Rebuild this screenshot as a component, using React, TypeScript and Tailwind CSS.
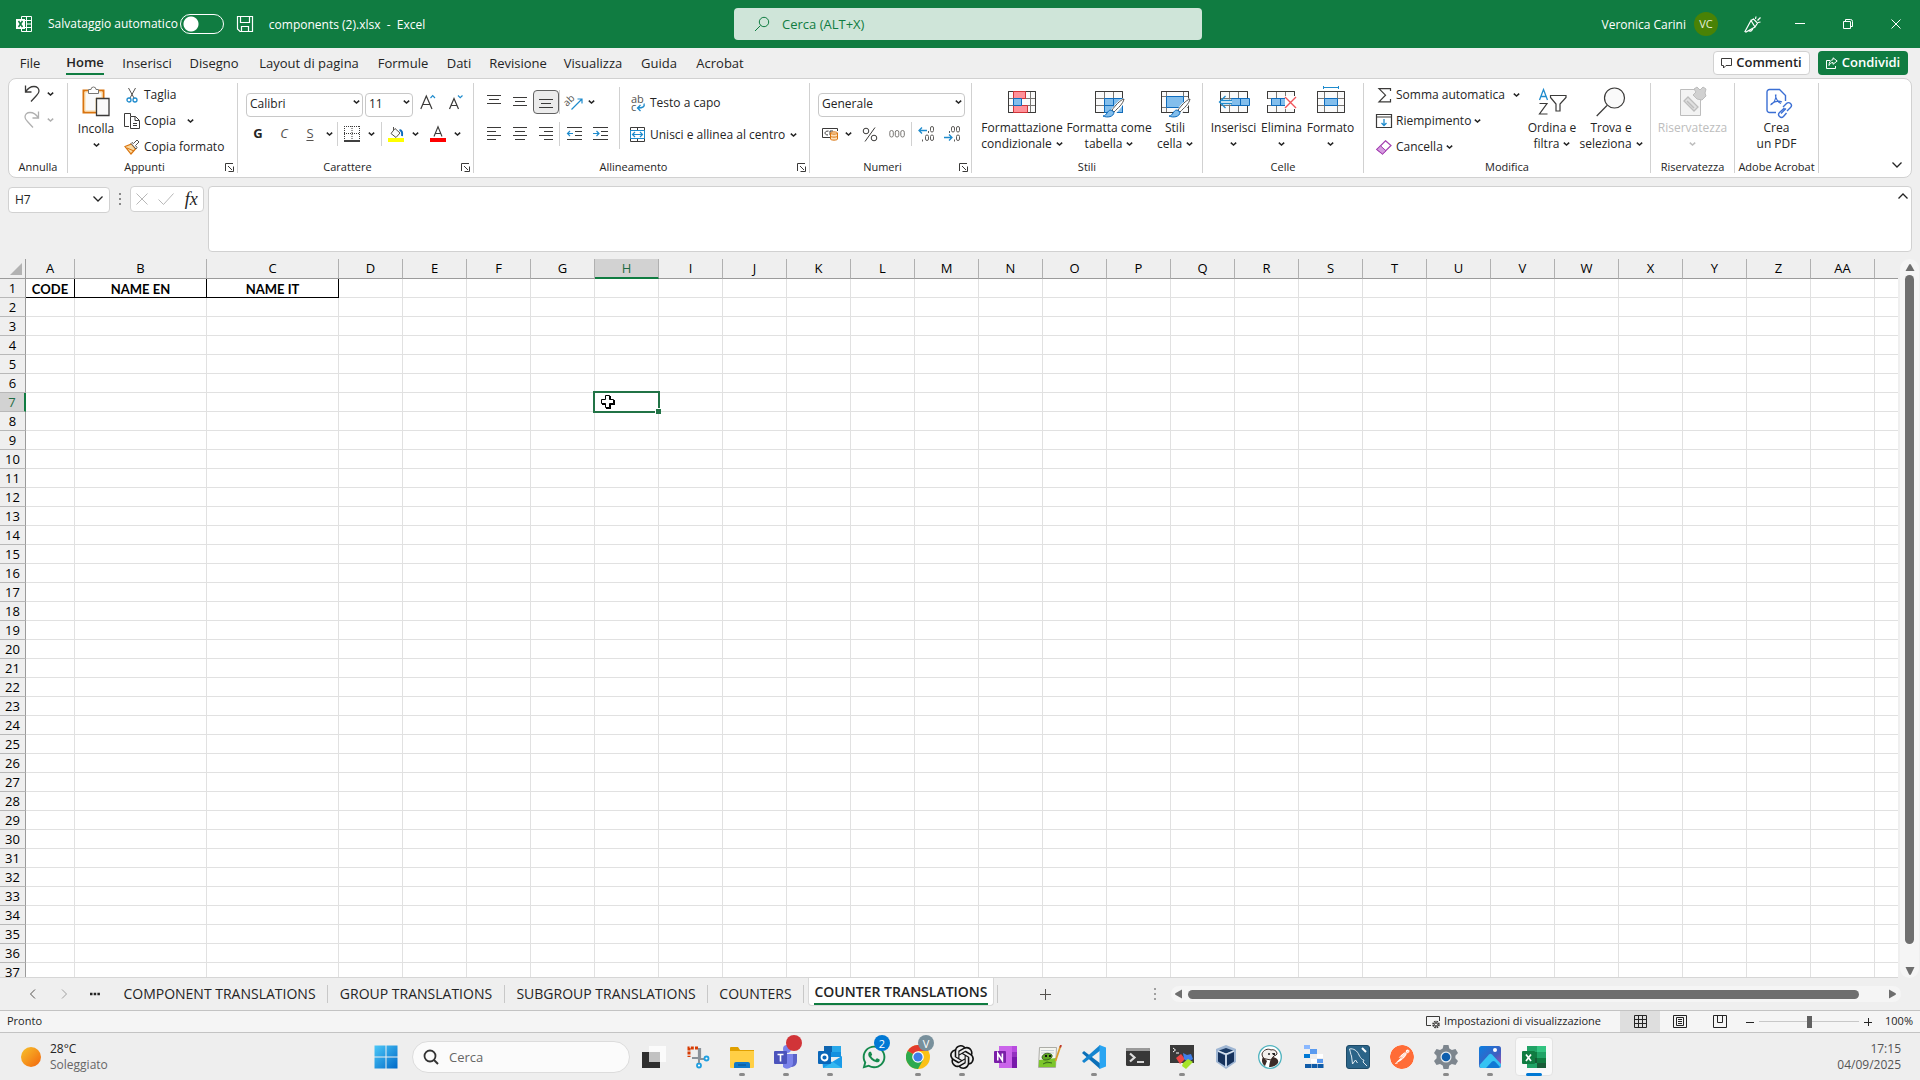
import React from "react";
import { SiOpenai, SiPostman } from "react-icons/si";
import { FaWhatsapp } from "react-icons/fa";

type Kids = { children?: React.ReactNode };

function Svg({ w, h, children }: { w: number; h: number } & Kids) {
  return (
    <svg width={w} height={h} viewBox={`0 0 ${w} ${h}`} fill="none" stroke="#3b3a39" aria-hidden="true" className="shrink-0 overflow-visible">
      {children}
    </svg>
  );
}

function Chevron({ color = "#242424", big = false, up = false }: { color?: string; big?: boolean; up?: boolean }) {
  return big ? (
    <Svg w={10} h={6}>
      <path d={up ? "M.5 5.5 5 1l4.500 4.500" : "M.5.5 5 5 9.500.5"} stroke={color} strokeWidth="1.300" />
    </Svg>
  ) : (
    <Svg w={7} h={4}>
      <path d="M.8.6 3.500 3 6.200.6" stroke={color} strokeWidth="1.500" />
    </Svg>
  );
}

const Launcher = () => (
  <button aria-label="Altre opzioni" className="absolute right-[3px] bottom-[1px] flex">
    <Svg w={9} h={9}>
      <path d="M.5 8V.5H8M3 3l4 4M8.500 3.500v5h-5" stroke="#3b3a39" />
    </Svg>
  </button>
);

function Group({ label, width, launcher, children }: { label: string; width: string; launcher?: boolean } & Kids) {
  return (
    <section aria-label={label} className={`relative my-1 flex shrink-0 flex-col border-r border-[#d1d1d1] ${width}`}>
      <div className="flex h-[78px] shrink-0">{children}</div>
      <div className={`text-center text-[11px] leading-3 whitespace-nowrap text-[#242424] ${launcher ? "pr-4" : ""}`}>{label}</div>
      {launcher && <Launcher />}
    </section>
  );
}

function IconBtn({ label, w = "w-[26px]", pressed, children }: { label: string; w?: string; pressed?: boolean } & Kids) {
  return (
    <button
      aria-label={label}
      aria-pressed={pressed}
      className={`flex h-6 shrink-0 items-center justify-center ${w} ${pressed ? "rounded border border-[#616161] bg-[#ebebeb]" : ""}`}
    >
      {children}
    </button>
  );
}

const Sep = () => <span className="h-6 w-px shrink-0 bg-[#d1d1d1]" />;

function BigBtn({ icon, lines, w, below, disabled }: { icon: React.ReactNode; lines: [string, string?]; w: string; below?: boolean; disabled?: boolean }) {
  return (
    <button disabled={disabled} className={`flex shrink-0 flex-col items-center pt-px whitespace-nowrap ${w} ${disabled ? "text-[#bdbdbd]" : ""}`}>
      <span className="flex h-9 items-center justify-center">{icon}</span>
      <span className="text-[12px] leading-4">{lines[0]}</span>
      <span className="flex h-4 items-center gap-1 text-[12px] leading-4">
        {lines[1]}
        {below && <Chevron color={disabled ? "#bdbdbd" : "#242424"} />}
      </span>
    </button>
  );
}

function RowBtn({ icon, text, chevron }: { icon: React.ReactNode; text: string; chevron?: string }) {
  return (
    <button className="flex h-[26px] items-center gap-1 text-[12px] whitespace-nowrap">
      <span className="flex w-4 justify-center">{icon}</span>
      {text}
      {chevron && <span className={chevron}><Chevron /></span>}
    </button>
  );
}

function Combo({ label, value, w }: { label: string; value: string; w: string }) {
  return (
    <div className={`relative h-6 shrink-0 ${w}`}>
      <select aria-label={label} defaultValue={value} className="h-6 w-full appearance-none rounded border border-[#c8c8c8] bg-white pb-[2px] pl-[3px] text-[12px] outline-none">
        <option>{value}</option>
      </select>
      <span className="pointer-events-none absolute top-[10px] right-[3px] flex"><Chevron /></span>
    </div>
  );
}

/* Ribbon drawings */
const Undo = ({ color, flip }: { color: string; flip?: boolean }) => (
  <Svg w={16} h={17}>
    <g transform={flip ? "translate(16 0) scale(-1 1)" : undefined} stroke={color} strokeWidth="1.3">
      <path d="M1.500.5v6.500h6M1.500 7C4 3 7 1.500 10 1.500c3 0 5 2 5 4.500 0 2-1 3-2.500 4.500L7 16.500" />
    </g>
  </Svg>
);
const Paste = () => (
  <Svg w={28} h={31}>
    <path d="M6 4.500H1.500v22H14M17 4.500h4.500V12" stroke="#d9740f" strokeWidth="2" />
    <path d="M3 6h17v6h-6v13H3z" fill="#fafafa" stroke="#fbd9a0" />
    <path d="M6.500 7.500v-4H9a2.500 2.500 0 0 1 5 0h2.500v4z" fill="#fff" stroke="#797774" />
    <path d="M14.500 12.500h12.500v17H14.500z" fill="#fafafa" strokeWidth="1.300" />
  </Svg>
);
const Scissors = () => (
  <Svg w={12} h={16}>
    <path d="M2.500 1 8 11M9.500 1 4 11" stroke="#55524f" />
    <circle cx="3" cy="13" r="2" stroke="#1e8bcd" strokeWidth="1.300" />
    <circle cx="9" cy="13" r="2" stroke="#1e8bcd" strokeWidth="1.300" />
  </Svg>
);
const Copy = () => (
  <Svg w={16} h={16}>
    <path d="M5 13.500H.5V.5H6.500V3" />
    <path d="M6.500 3.500h5l4 4v8h-9zM11 3.500v4h4M9 10.500h4M9 12.500h4" />
  </Svg>
);
const Brush = () => (
  <Svg w={16} h={16}>
    <path d="M1 7.500 7.500 5l4 5L7 15z" fill="#fbd9a0" stroke="#d9740f" strokeWidth="1.200" />
    <path d="m3 9 7 3" stroke="#d9740f" />
    <path d="M7 4.500 12 10l1-1.500-1.500-2L15 3l-2-2-3.500 3.500-1.500-1z" fill="#fff" stroke="#55524f" />
  </Svg>
);
const ABig = ({ small }: { small?: boolean }) => (
  <Svg w={17} h={16}>
    <path d={small ? "M1.500 15 6 4.500 10.500 15M3 11.500h6" : "M.8 15 6.300 2 12 15M3 10.500h7"} strokeWidth="1.200" />
    <path d={small ? "m10 1.500 2.200 2.200L14.500 1.500" : "m10.500 4 2.200-2.300L15 4"} stroke="#1e8bcd" strokeWidth="1.200" />
  </Svg>
);
const Borders = () => (
  <Svg w={16} h={16}>
    <path d="M.5 0v14M15.500 0v14M8 0v14M0 .5h16M0 7.500h16" strokeDasharray="1 1" />
    <path d="M0 15h16" stroke="#000" strokeWidth="1.500" />
  </Svg>
);
const Bucket = () => (
  <Svg w={16} h={16}>
    <path d="M7 2.500 12 7l-4 4.500L3 7.500z" fill="#fafafa" stroke="#55524f" />
    <path d="M5.500 4.500V1" stroke="#55524f" />
    <path d="M11.500 4c3 .5 3 3 2.500 6" stroke="#0f6cbd" strokeWidth="2" />
    <path d="M0 14h16" stroke="#ff0" strokeWidth="4" />
  </Svg>
);
const FontColor = () => (
  <Svg w={16} h={16}>
    <path d="M4 10.500 8 .8l4 9.700M5.200 7.500h5.600" strokeWidth="1.100" />
    <path d="M0 14h16" stroke="red" strokeWidth="4" />
  </Svg>
);
const Lines = ({ d }: { d: string }) => (
  <Svg w={14} h={14}>
    <path d={d} />
  </Svg>
);
const Orient = () => (
  <Svg w={17} h={16}>
    <text x="1" y="13" fontSize="10" fill="#55524f" stroke="none" transform="rotate(-45 1 13)" fontFamily="Open Sans">ab</text>
    <path d="M5.500 15.500 16 5M11.500 5H16v4.500" stroke="#1e8bcd" strokeWidth="1.200" />
  </Svg>
);
const Indent = ({ right }: { right?: boolean }) => (
  <Svg w={15} h={14}>
    <path d="M0 .5h15M8 4.500h7M8 8.500h7M0 12.500h15" />
    <path d={right ? "M0 6.500h6M3.500 4 6 6.500 3.500 9" : "M6 6.500H.5M3 4 .5 6.500 3 9"} stroke="#1e8bcd" strokeWidth="1.200" />
  </Svg>
);
const Wrap = () => (
  <Svg w={16} h={17}>
    <text fontSize="11" fill="#55524f" stroke="none" fontFamily="Open Sans">
      <tspan x="1" y="8">ab</tspan>
      <tspan x="1" y="16">c</tspan>
    </text>
    <path d="M14 8.500c1 3-1 4.500-6 4.500M10.500 10 7.500 13l3 3" stroke="#1e8bcd" strokeWidth="1.300" />
  </Svg>
);
const Merge = () => (
  <Svg w={16} h={16}>
    <path d="M.5.5h14v14H.5zM7.500 0v3M7.500 12v3" />
    <path d="M.5 3.500h14v8H.5z" stroke="#1e8bcd" fill="#fff" />
    <path d="M2.500 7.500h10M5 5 2.500 7.500 5 10M10 5l2.500 2.500L10 10" stroke="#1e8bcd" strokeWidth="1.200" />
  </Svg>
);
const Money = () => (
  <Svg w={17} h={14}>
    <path d="M8 10.500H.5V1.500h15V4M6.500 4C3.500 4 3 5.500 3 6s.5 2 3 2M8 8V4h3" />
    <path d="M8.500 6c0-1.500 7-1.500 7 0v6c0 1.500-7 1.500-7 0z" fill="#fde3c0" stroke="#d9740f" />
    <path d="M8.500 6c0 1.500 7 1.500 7 0M8.500 9c0 1.500 7 1.500 7 0" stroke="#d9740f" />
  </Svg>
);
const Percent = () => (
  <Svg w={16} h={15}>
    <circle cx="4" cy="4" r="2.800" />
    <circle cx="12" cy="11" r="2.800" />
    <path d="M13 .5 3 14.500" />
  </Svg>
);
const Thousands = () => (
  <Svg w={16} h={8}>
    <g stroke="#797774">
      <rect x=".8" y=".5" width="3.500" height="6.500" rx="1.700" />
      <rect x="6.300" y=".5" width="3.500" height="6.500" rx="1.700" />
      <rect x="11.800" y=".5" width="3.500" height="6.500" rx="1.700" />
    </g>
  </Svg>
);
const Decimal = ({ less }: { less?: boolean }) => (
  <Svg w={17} h={16}>
    <g stroke="#605e5c">
      <rect x="12.500" y=".5" width="3" height="5.500" rx="1.500" />
      <rect x="12.500" y="9" width="3" height="5.500" rx="1.500" />
      <rect x={7.5} y={less ? 0.5 : 9} width="3" height="5.500" rx="1.500" />
      <path d={less ? "M5.500 5v2M10.500 13.500v2" : "M10.500 5v2M4.500 13.500v2"} />
    </g>
    <path d={less ? "M0 11.500h8M5 8.500l3 3-3 3" : "M9 4.500H1M4 1.500l-3 3 3 3"} stroke="#1e8bcd" strokeWidth="1.300" />
  </Svg>
);
const GridBase = () => (
  <>
    <path d="M.5 4.500h27v21H.5z" fill="#fafafa" />
    <path d="M9.500 5v20M18.500 5v20M1 11.500h26M1 18.500h26" stroke="#797774" />
    <path d="M.5 4.500h27v21H.5z" />
  </>
);
const CondFmt = () => (
  <Svg w={28} h={30}>
    <path d="M.5 4.500h27v21H.5z" fill="#fafafa" />
    <path d="M5.500 5v20M22.500 5v20M1 11.500h26M1 18.500h26" stroke="#797774" />
    <path d="M.5 4.500h27v21H.5z" />
    <path d="M5.500 4.500h12v7h-12zM5.500 18.500h14v7h-14z" fill="#ff9199" stroke="#d13438" />
    <path d="M5.500 11.500h8v7h-8z" fill="#83beec" stroke="#0f6cbd" />
  </Svg>
);
const BrushOver = () => (
  <>
    <path d="M29 12c-4 1-9 7-12 11l3 3c4-4 9-9 9-14z" fill="#fff" stroke="#fff" strokeWidth="2" />
    <path d="M29 12c-4 1-9 7-12 11l2 2c4-4 9-8 10-13z" fill="#fff" stroke="#55524f" />
    <path d="M16 23c-4 0-4 6-8 6 4 2 11 1 11-4z" fill="#83beec" stroke="#0f6cbd" />
  </>
);
const TableFmt = () => (
  <Svg w={28} h={30}>
    <GridBase />
    <path d="M9.500 11.500h18v14h-18z" fill="#83beec" stroke="#0f6cbd" />
    <path d="M18.500 12v13M10 18.500h17" stroke="#0f6cbd" />
    <BrushOver />
  </Svg>
);
const CellStyle = () => (
  <Svg w={28} h={30}>
    <path d="M.5 4.500h27v21H.5z" fill="#fafafa" />
    <path d="M5.500 5v20M22.500 5v20M1 9.500h26M1 20.500h26" stroke="#797774" />
    <path d="M.5 4.500h27v21H.5z" />
    <path d="M5.500 9.500h17v11h-17z" fill="#83beec" stroke="#0f6cbd" />
    <BrushOver />
  </Svg>
);
const InsertCells = () => (
  <Svg w={32} h={30}>
    <g transform="translate(2 0)"><GridBase /></g>
    <path d="M13.500 11.500h18v7h-18z" fill="#83beec" stroke="#0f6cbd" />
    <path d="M22.500 12v6" stroke="#0f6cbd" />
    <path d="M13 13.500H4v3h9z" fill="#fff" stroke="#fff" strokeWidth="2" />
    <path d="M14 13.500H3M14 16.500H3M7.500 9 1.500 15l6 6" stroke="#1e8bcd" strokeWidth="1.300" />
  </Svg>
);
const DeleteCells = () => (
  <Svg w={30} h={30}>
    <GridBase />
    <path d="M0 12h6v6H0z" fill="#fff" stroke="none" />
    <path d="M4.500 11.500h14v7h-14z" fill="#83beec" stroke="#0f6cbd" />
    <path d="M13.500 12v6" stroke="#0f6cbd" />
    <path d="M18 9h12v13H18z" fill="#fff" stroke="none" />
    <path d="m18 10 11 11M29 10 18 21" stroke="#f0555a" strokeWidth="1.400" />
  </Svg>
);
const FormatCells = () => (
  <Svg w={28} h={30}>
    <path d="M.5 4.500h27v21H.5z" fill="#fafafa" />
    <path d="M7.500 5v20M20.500 5v20M1 11.500h26M1 18.500h26" stroke="#797774" />
    <path d="M.5 4.500h27v21H.5z" />
    <path d="M7.500 11.500h13v7h-13z" fill="#83beec" stroke="#0f6cbd" />
    <path d="M6.500-1v3M21.500-1v3M6.500.5h15" stroke="#1e8bcd" />
  </Svg>
);
const Sigma = () => (
  <Svg w={13} h={15}>
    <path d="M12.500 3V.7H1L7.500 7.200 1 13.800h11.500V11" strokeWidth="1.200" />
  </Svg>
);
const Fill = () => (
  <Svg w={16} h={14}>
    <path d="M.5.5h15v13H.5zM.5 3h15" strokeWidth="1.200" />
    <path d="M8 5v6.500M5.500 9 8 11.500 10.500 9" stroke="#1e8bcd" strokeWidth="1.300" />
  </Svg>
);
const Eraser = () => (
  <Svg w={16} h={15}>
    <path d="M9.500.8 15 5.500 6.500 14 .8 9.500z" fill="#fff" stroke="#a33fb0" strokeWidth="1.200" />
    <path d="m4.500 5.800 5.500 5L6.500 14 .8 9.500z" fill="#d59be0" stroke="#a33fb0" />
  </Svg>
);
const SortFilter = () => (
  <Svg w={28} h={28}>
    <path d="M1.500 12 5.500 1.500 9.500 12M3 8.500h5" stroke="#1e8bcd" strokeWidth="1.300" />
    <path d="M1.500 15.500H9l-7.500 10.500h8M12.500 7.500h15.500v2L22 16v7h-4v-7l-5.500-6.500z" strokeWidth="1.200" />
  </Svg>
);
const Find = () => (
  <Svg w={30} h={30}>
    <circle cx="18.500" cy="11" r="10" fill="#fafafa" strokeWidth="1.200" />
    <path d="M11 18.500.7 29" strokeWidth="1.200" />
  </Svg>
);
const Sensitivity = () => (
  <Svg w={28} h={32}>
    <path d="M1.500 3.500h20v26h-20z" fill="#f3f3f3" stroke="#bdbdbd" />
    <path d="m9 11 10 10-4 4L5 15z" fill="#e0e0e0" stroke="#bdbdbd" strokeWidth="1.300" />
    <path d="m8 15 7 7" stroke="#bdbdbd" strokeWidth="1.500" />
    <path d="m14 9 3-3-2-3 3-2 3 3 3-3 3 2-1 4 1 3-4 4-5-1z" fill="#d1d1d1" stroke="#bdbdbd" />
  </Svg>
);
const Pdf = () => (
  <Svg w={22} h={28}>
    <g stroke="#3b6fd4" strokeWidth="1.400">
      <path d="M10 24.500H3.500a2.500 2.500 0 0 1-2.500-2.500V4a2.500 2.500 0 0 1 2.500-2.500h10l6 6V13" />
      <path d="M9.500 6.500c-.5 4 3 8 5.500 9M4.500 17C8 15 10 11 10 6.500M5 16c4-3 8-3.500 11-2" strokeWidth="1.100" />
      <path d="m17 19 3.500-3.500a2.600 2.600 0 0 1 4 4L21 23M20 20.500l-5 5M18.500 20l-5 4.500a2.600 2.600 0 0 0 4 4l3-3.500" />
    </g>
  </Svg>
);

/* Taskbar drawings, each on a 24px square */
const T = ({ children }: Kids) => (
  <svg width="24" height="24" viewBox="0 0 24 24" aria-hidden="true">{children}</svg>
);

const badge = "absolute top-[2px] left-[22px] flex size-4 items-center justify-center rounded-full text-[11px] leading-none text-white";

const apps: { name: string; running?: boolean; active?: boolean; badge?: React.ReactNode; icon: React.ReactNode }[] = [
  {
    name: "Visualizzazione attività",
    icon: <T><path d="M7 1h17v16H7z" fill="#fbfbfb" /><path d="M0 7h18v16H0z" fill="#2f2f2f" /><path d="M7 7h11v10H7z" fill="#c2c2c2" /></T>,
  },
  {
    name: "Strumento di cattura",
    icon: (
      <T>
        <path d="M12 3H3v9" fill="none" stroke="#d83b01" strokeWidth="3" strokeDasharray="3 1.200" />
        <path d="M14 3v10h-8M13 3v11l7 0" fill="none" stroke="#8a9299" strokeWidth="2.200" />
        <circle cx="20.500" cy="13.500" r="2" fill="#fff" stroke="#1f9fe0" strokeWidth="1.800" />
        <circle cx="13" cy="20.500" r="2" fill="#fff" stroke="#1f9fe0" strokeWidth="1.800" />
        <path d="M13 14v4" stroke="#8a9299" strokeWidth="2" />
      </T>
    ),
  },
  {
    name: "Esplora file",
    running: true,
    icon: <T><path d="M0 3q0-1 1-1h7l2 3h14v4H0z" fill="#e0a000" /><path d="M0 6h24v16q0 1-1 1H1q-1 0-1-1z" fill="#ffcf45" /><path d="M4 23v-4q0-2 2-2h12q2 0 2 2v4z" fill="#0f78c8" /><path d="M8 20h8" stroke="#0a4c88" /></T>,
  },
  {
    name: "Teams",
    running: true,
    badge: <span className={`${badge} bg-[#d13438]`} />,
    icon: <T><circle cx="13" cy="4" r="4" fill="#7b83eb" /><path d="M9 9h14v7a6 6 0 0 1-5 6H9z" fill="#5a62c9" /><path d="M9 9h10v8a6 6 0 0 1-10 5z" fill="#7b83eb" /><rect y="6" width="13" height="13" rx="1" fill="#4b53bc" /><path d="M3.500 9.500h6M6.500 9.500v7" stroke="#fff" strokeWidth="1.600" /></T>,
  },
  {
    name: "Outlook",
    running: true,
    icon: <T><path d="M6 1h17v11H6z" fill="#1490df" /><path d="M14 1h9v6h-9z" fill="#28a8ea" /><path d="M6 1h8v6H6z" fill="#0f65b0" /><path d="M4 12 14 17l10-6v12H5z" fill="#1a9be8" /><path d="m5 23 10-6 9 6z" fill="#35b8f1" /><rect y="6" width="13" height="13" rx="1" fill="#0a66b8" /><circle cx="6.500" cy="12.500" r="3" fill="none" stroke="#fff" strokeWidth="1.800" /></T>,
  },
  { name: "WhatsApp", badge: <span className={`${badge} bg-[#0078d4]`}>2</span>, icon: <FaWhatsapp size={26} color="#14894c" /> },
  {
    name: "Chrome",
    running: true,
    badge: <span className={`${badge} bg-[#78909c] text-[#dfe6e9]`}>V</span>,
    icon: <T><circle cx="12" cy="12" r="12" fill="#fbc116" /><path d="M12 12 1.600 6A12 12 0 0 1 22.400 6H12z" fill="#e33b2e" /><path d="M12 12 1.600 6A12 12 0 0 0 12 24l5-9z" fill="#2da94f" /><circle cx="12" cy="12" r="5.800" fill="#fff" /><circle cx="12" cy="12" r="4.600" fill="#3e7ee8" /></T>,
  },
  { name: "ChatGPT", running: true, icon: <SiOpenai size={24} color="#111" /> },
  {
    name: "OneNote",
    icon: <T><path d="M5 1h18v22H5z" fill="#ca64ea" /><path d="M18 1h5v6h-5z" fill="#b84bdf" /><path d="M18 7h5v5h-5z" fill="#9332bf" /><path d="M18 12h5v11h-5z" fill="#7719aa" /><rect y="6" width="12" height="12" rx="1" fill="#7a1ea8" /><path d="M3.800 15.500v-7l4.600 7v-7" fill="none" stroke="#fff" strokeWidth="1.600" /></T>,
  },
  {
    name: "Notepad++",
    icon: (
      <T>
        <path d="M1.500 2.500h17l-1 20H.5z" fill="#f4f5ef" stroke="#9a9a94" strokeWidth=".8" />
        <path d="M3 5.500h13M3 8h13" stroke="#c6cfd6" />
        <path d="m1 15 17-2-.5 9H.8z" fill="#7cc62b" />
        <path d="M4 12c1-4 7-5 10-2 1 3-3 5-7 5-2 0-3-1.500-3-3zM5 19l4-2 5 1" fill="#5fa823" stroke="#27511a" strokeWidth=".8" />
        <path d="M7 10h2v2H7zM11 10h2v2h-2z" fill="#111" />
        <path d="M22.500 1 17.500 16" stroke="#d99a2b" strokeWidth="1.800" />
        <path d="m23 0-.8 2.500" stroke="#c0392b" strokeWidth="1.800" />
      </T>
    ),
  },
  {
    name: "Visual Studio Code",
    running: true,
    icon: <T><path d="m0 8 2-2 17 13-1 5z" fill="#0a6fb8" /><path d="m0 16 2 2L19 5l-1-5z" fill="#1484cf" /><path d="m17.500 0 6.500 2.500v19L17.500 24z" fill="#2aa5f2" /></T>,
  },
  {
    name: "Terminale",
    icon: <T><rect y="3" width="24" height="18" rx="1.500" fill="#383838" /><path d="M0 6V4.500Q0 3 1.500 3h21Q24 3 24 4.500V6z" fill="#9a9a9a" /><path d="m4 8.500 4.500 4L4 16.500" fill="none" stroke="#ddd" strokeWidth="2.200" /><path d="M11 17h7" stroke="#fff" strokeWidth="1.600" /></T>,
  },
  {
    name: "Cmder",
    running: true,
    icon: <T><path d="M0 0h24v18H0z" fill="#3a3a3a" /><path d="m3 3 2.500 2L3 7" fill="none" stroke="#fff" /><path d="M6 8h3" stroke="#fff" /><path d="m6 13 5-4 4 5-5 5z" fill="#ee4545" /><path d="m13 8 4 2 4-1 2 5-5 3-4-3z" fill="#3f7fe8" /><path d="m13 18 5-4 5 3-7 7-4-3z" fill="#a6e32a" /></T>,
  },
  {
    name: "VirtualBox",
    icon: <T><path d="m12 0 10 4v13l-10 7L2 17V4z" fill="#9fb6d3" /><path d="m12 3 7 2.500-7 3-7-3z" fill="#1b3b66" /><path d="m4 7 7 3.200V21l-7-4.500zM20 7l-7 3.200V21l7-4.500z" fill="#16325c" /><path d="M12 9v13M12 9 4 6M12 9l8-3" stroke="#e8eef6" /></T>,
  },
  {
    name: "DBeaver",
    icon: <T><circle cx="12" cy="12" r="11.300" fill="#fff" stroke="#4fb3bf" strokeWidth="1.300" /><path d="M4 9c1-4 6-6 9-4 3-1 6 1 6 4-1 2-3 1-4 3l-2 3-5-1C6 14 4 12 4 9z" fill="#f4f0ee" stroke="#3b2b27" /><path d="M15 12c4 1 6 3 5 6-2 3-6 4-9 4 1-3 0-6 4-10zM5 12l4 4-2 5c-3-2-4-6-2-9z" fill="#3b2b27" /><circle cx="11" cy="9" r="1" fill="#222" /><path d="M14 8h3v2h-2z" fill="#222" /></T>,
  },
  {
    name: "Diagramma",
    icon: <T><path d="M2 0h6v4H2z" fill="#8ab8ff" /><path d="M8 4h7v5H8z" fill="#5a9bf0" /><path d="M2 9h6v4H2z" fill="#0078d4" /><path d="M9 14h6v4H9zM15 9h6v4h-6z" fill="#fff" /><path d="M15 14h6v4h-6z" fill="#5a9bf0" /><path d="M3 19h6v4H3zM9.500 19H15v4H9.500zM15.500 19h6v4h-6z" fill="#0f5ba8" /></T>,
  },
  {
    name: "MySQL Workbench",
    icon: <T><rect x=".5" y=".5" width="23" height="23" rx="2.500" fill="#2b6488" stroke="#1d4a67" /><path d="M3.500 4c4-1 8 2 9.500 6 2 4 4 5 5 5l-1 2 4 4M3.500 4c1 3 1 5 2 7l1 8 3-4 2 3" fill="none" stroke="#dfeaf1" /><path d="m16 3 4 4" stroke="#fff" strokeWidth="2" /></T>,
  },
  { name: "Postman", icon: <SiPostman size={24} color="#ff6c37" className="rounded-full bg-white" /> },
  {
    name: "Impostazioni",
    running: true,
    icon: <T><path d="M9.500 0h5l.8 3.500 2.600 1.400L21.500 4 24 8l-2.600 2.700v2.600L24 16l-2.500 4-3.600-1-2.600 1.500L14.500 24h-5l-.8-3.500L6 19l-3.500 1L0 16l2.600-2.700v-2.600L0 8l2.500-4L6 4.900l2.700-1.400z" fill="#7d868e" /><circle cx="12" cy="12" r="5.500" fill="#e8edf0" /><circle cx="12" cy="12" r="4.300" fill="#0f5fae" /></T>,
  },
  {
    name: "Foto",
    running: true,
    icon: (
      <T>
        <defs><linearGradient id="photo" x1="0" y1="0" x2="1" y2="1"><stop offset="0" stopColor="#0b7fe0" /><stop offset=".6" stopColor="#3f5fc0" /><stop offset="1" stopColor="#b84bb0" /></linearGradient></defs>
        <rect x="1" y="1" width="22" height="22" rx="2.500" fill="url(#photo)" />
        <path d="M1.500 20 11 9.500q1.500-1.500 3 0L23 19v1.500q0 2.500-2.500 2.500h-17q-2 0-2-3z" fill="#35c3f3" />
        <path d="m8 23 6-6.500q1.500-1 3 0L22 22l-1.500 1z" fill="#0f78d4" />
        <circle cx="17" cy="5" r="2" fill="#fff" />
      </T>
    ),
  },
  {
    name: "Excel",
    active: true,
    icon: <T><path d="M5 1h19v22H5z" fill="#21a366" /><path d="M15 1h9v6h-9z" fill="#33c481" /><path d="M5 7h10v6H5z" fill="#107c41" /><path d="M15 13h9v5h-9z" fill="#107c41" /><path d="M5 13h10v10h9v-5H5z" fill="#185c37" /><rect y="6" width="13" height="13" rx="1" fill="#107c41" /><path d="m4 9.500 5 6.500M9 9.500 4 16" stroke="#fff" strokeWidth="1.700" /></T>,
  },
];

const menu: [string, string][] = [
  ["File", "w-[44px]"], ["Home", "w-[66px]"], ["Inserisci", "w-[58px]"], ["Disegno", "w-[76px]"], ["Layout di pagina", "w-[114px]"],
  ["Formule", "w-[74px]"], ["Dati", "w-[38px]"], ["Revisione", "w-[80px]"], ["Visualizza", "w-[70px]"], ["Guida", "w-[62px]"], ["Acrobat", "w-[60px]"],
];

const cols = [..."ABCDEFGHIJKLMNOPQRSTUVWXYZ", "AA", ""];
const headings: Record<string, string> = { A: "CODE", B: "NAME EN", C: "NAME IT" };
const sheetTabs: [string, string][] = [
  ["COMPONENT TRANSLATIONS", "w-[216px]"], ["GROUP TRANSLATIONS", "w-[177px]"], ["SUBGROUP TRANSLATIONS", "w-[203px]"], ["COUNTERS", "w-[96px]"],
];

function TitleBar() {
  return (
    <header className="grid h-12 shrink-0 grid-cols-[1fr_468px_1fr] items-center bg-[#107c41] text-[12px] text-white">
      <div className="flex items-center pl-4">
        <Svg w={16} h={16}>
          <path d="M5.500 3V.5h10v15h-10V13M10.500 1v14M6 4.500h9M10 8h5M6 11.500h9" stroke="#fff" />
          <path d="M0 3h9v10H0z" fill="#fff" stroke="none" />
          <path d="m2.500 5 4 6M6.500 5l-4 6" stroke="#107c41" strokeWidth="1.500" />
        </Svg>
        <label className="ml-4 flex items-center gap-[2px] whitespace-nowrap">
          Salvataggio automatico
          <input type="checkbox" role="switch" className="h-5 w-11 appearance-none rounded-full border border-white bg-[radial-gradient(circle_at_10px_9px,white_7px,transparent_8px)]" />
        </label>
        <button aria-label="Salva" className="ml-[13px]">
          <Svg w={16} h={16}>
            <path d="M.5.5h15v15H3L.5 13zM3.500.5v6h9v-6M4.500 15.500v-5h7v5" stroke="#fff" strokeWidth="1.200" />
          </Svg>
        </button>
        <h1 className="ml-4 pt-px whitespace-pre">components (2).xlsx  -  Excel</h1>
      </div>
      <label className="-mr-2 ml-2 flex h-8 items-center gap-3 rounded bg-[#cfe5d9] pl-5 text-[#107c41]">
        <Svg w={16} h={16}>
          <circle cx="10" cy="6" r="4.700" stroke="#107c41" />
          <path d="M6.500 9.500 1 15" stroke="#107c41" />
        </Svg>
        <input aria-label="Cerca" placeholder="Cerca (ALT+X)" className="flex-1 bg-transparent pt-px text-[13px] outline-none placeholder:text-[#107c41]" />
      </label>
      <div className="flex items-center justify-end">
        <span className="pt-px">Veronica Carini</span>
        <span className="mr-[10px] ml-2 flex size-6 items-center justify-center rounded-full bg-[#498205] text-[11px] text-[#e6f0d8]">VC</span>
        <button aria-label="Novità" className="flex w-12 justify-center">
          <Svg w={17} h={17}>
            <path d="m1 15.500 6-11 4 6.500-9 5zM7 4.500 9.500 3l4 4-2.500 4M4.500 14c1 2 4 1.500 4.500-2M11.500 3l.5-2.500M13.500 4.500l3-3M14 6.500l2.500-.5" stroke="#fff" strokeWidth="1.200" />
          </Svg>
        </button>
        <button aria-label="Riduci a icona" className="flex w-12 justify-center"><Svg w={10} h={2}><path d="M0 .5h10" stroke="#fff" /></Svg></button>
        <button aria-label="Ripristina" className="flex w-12 justify-center">
          <Svg w={10} h={10}><path d="M.5 2.500h7v7h-7zM2.500 2V.5h5q2 0 2 2v5H8" stroke="#fff" /></Svg>
        </button>
        <button aria-label="Chiudi" className="flex w-12 justify-center"><Svg w={10} h={10}><path d="m.5.500 9 9M9.500.5l-9 9" stroke="#fff" /></Svg></button>
      </div>
    </header>
  );
}

function Ribbon() {
  return (
    <div className="mx-2 flex h-[100px] shrink-0 rounded-lg border border-[#d1d1d1] bg-white">
      <Group label="Annulla" width="w-[59px]">
        <div className="flex flex-col gap-[9px] pt-[2px] pl-[15px]">
          <button aria-label="Annulla" className="flex items-center gap-[7px]"><Undo color="#3b3a39" /><Chevron /></button>
          <button aria-label="Ripeti" className="flex items-center gap-[7px]"><Undo color="#b0b0b0" flip /><Chevron color="#b0b0b0" /></button>
        </div>
      </Group>
      <Group label="Appunti" width="w-[170px]" launcher>
        <button className="flex w-14 flex-col items-center justify-start pt-[3px] text-[12px]">
          <Paste />
          <span className="mt-1 leading-4">Incolla</span>
          <span className="mt-[6px] flex"><Chevron /></span>
        </button>
        <div className="-mt-px flex flex-col">
          <RowBtn icon={<Scissors />} text="Taglia" />
          <RowBtn icon={<Copy />} text="Copia" chevron="ml-[7px]" />
          <RowBtn icon={<Brush />} text="Copia formato" />
        </div>
      </Group>
      <Group label="Carattere" width="w-[236px]" launcher>
        <div className="flex flex-col gap-2 pt-[7px] pl-2">
          <div className="flex items-center gap-[2px]">
            <Combo label="Tipo di carattere" value="Calibri" w="w-[117px]" />
            <Combo label="Dimensione" value="11" w="w-[48px]" />
            <IconBtn label="Aumenta dimensione" w="w-[27px]"><ABig /></IconBtn>
            <IconBtn label="Riduci dimensione" w="w-6"><ABig small /></IconBtn>
          </div>
          <div className="-ml-px flex items-center">
            <IconBtn label="Grassetto"><b className="text-[13px]">G</b></IconBtn>
            <IconBtn label="Corsivo"><i className="text-[13px] text-[#55524f]">C</i></IconBtn>
            <IconBtn label="Sottolineato"><span className="text-[13px] text-[#55524f] underline underline-offset-2">S</span></IconBtn>
            <IconBtn label="Stili sottolineatura" w="w-[12px]"><Chevron /></IconBtn>
            <span className="w-[2px]" />
            <Sep />
            <IconBtn label="Bordi" w="w-[28px]"><Borders /></IconBtn>
            <IconBtn label="Altri bordi" w="w-[11px]"><Chevron /></IconBtn>
            <span className="w-1" />
            <Sep />
            <IconBtn label="Colore riempimento" w="w-[28px]"><Bucket /></IconBtn>
            <IconBtn label="Altri riempimenti" w="w-[10px]"><Chevron /></IconBtn>
            <span className="w-1" />
            <IconBtn label="Colore carattere" w="w-[28px]"><FontColor /></IconBtn>
            <IconBtn label="Altri colori" w="w-[10px]"><Chevron /></IconBtn>
          </div>
        </div>
      </Group>
      <Group label="Allineamento" width="w-[336px]" launcher>
        <div className="mt-1 mb-3 flex w-[146px] flex-col gap-2 border-r border-[#d1d1d1] pt-[3px] pl-[7px]">
          <div className="flex items-center">
            <IconBtn label="Allinea in alto"><Lines d="M0 .5h14M2 4.500h10M0 8.500h14" /></IconBtn>
            <IconBtn label="Allinea al centro"><Lines d="M0 2.500h14M2 6.500h10M0 10.500h14" /></IconBtn>
            <IconBtn label="Allinea in basso" pressed><Lines d="M0 4.500h14M2 8.500h10M0 12.500h14" /></IconBtn>
            <Sep />
            <IconBtn label="Orientamento" w="w-7"><Orient /></IconBtn>
            <Chevron />
          </div>
          <div className="flex items-center">
            <IconBtn label="Allinea a sinistra"><Lines d="M0 .5h14M0 4.500h9M0 8.500h14M0 12.500h9" /></IconBtn>
            <IconBtn label="Centra"><Lines d="M0 .5h14M2 4.500h10M0 8.500h14M2 12.500h10" /></IconBtn>
            <IconBtn label="Allinea a destra"><Lines d="M0 .5h14M5 4.500h9M0 8.500h14M5 12.500h9" /></IconBtn>
            <Sep />
            <IconBtn label="Riduci rientro" w="w-7"><Indent /></IconBtn>
            <IconBtn label="Aumenta rientro" w="w-6"><Indent right /></IconBtn>
          </div>
        </div>
        <div className="flex flex-col gap-[6px] pt-[7px] pl-[10px]">
          <RowBtn icon={<Wrap />} text="Testo a capo" />
          <RowBtn icon={<Merge />} text="Unisci e allinea al centro" chevron="ml-px" />
        </div>
      </Group>
      <Group label="Numeri" width="w-[162px]" launcher>
        <div className="flex flex-col gap-2 pt-[7px] pl-2">
          <Combo label="Formato numero" value="Generale" w="w-[147px]" />
          <div className="flex items-center">
            <IconBtn label="Valuta" w="w-[24px]"><Money /></IconBtn>
            <IconBtn label="Altre valute" w="w-[12px]"><Chevron /></IconBtn>
            <IconBtn label="Percentuale" w="w-[32px]"><Percent /></IconBtn>
            <IconBtn label="Migliaia" w="w-[22px]"><Thousands /></IconBtn>
            <span className="w-[3px]" />
            <Sep />
            <IconBtn label="Aumenta decimali" w="w-[28px]"><Decimal /></IconBtn>
            <IconBtn label="Diminuisci decimali" w="w-[24px]"><Decimal less /></IconBtn>
          </div>
        </div>
      </Group>
      <Group label="Stili" width="w-[231px]">
        <div className="flex pl-2">
          <BigBtn icon={<CondFmt />} lines={["Formattazione", "condizionale"]} w="w-[84px]" below />
          <BigBtn icon={<TableFmt />} lines={["Formatta come", "tabella"]} w="w-[90px]" below />
          <BigBtn icon={<CellStyle />} lines={["Stili", "cella"]} w="w-[42px]" below />
        </div>
      </Group>
      <Group label="Celle" width="w-[161px]">
        <div className="flex pl-[6px]">
          <BigBtn icon={<InsertCells />} lines={["Inserisci"]} w="w-[49px]" below />
          <BigBtn icon={<DeleteCells />} lines={["Elimina"]} w="w-[47px]" below />
          <BigBtn icon={<FormatCells />} lines={["Formato"]} w="w-[51px]" below />
        </div>
      </Group>
      <Group label="Modifica" width="w-[287px]">
        <div className="-mt-px flex w-[159px] flex-col pl-3">
          <RowBtn icon={<Sigma />} text="Somma automatica" chevron="ml-1" />
          <RowBtn icon={<Fill />} text="Riempimento" chevron="-ml-px" />
          <RowBtn icon={<Eraser />} text="Cancella" chevron="-ml-px" />
        </div>
        <BigBtn icon={<SortFilter />} lines={["Ordina e", "filtra"]} w="w-[58px]" below />
        <BigBtn icon={<Find />} lines={["Trova e", "seleziona"]} w="w-[60px]" below />
      </Group>
      <Group label="Riservatezza" width="w-[84px]">
        <BigBtn icon={<Sensitivity />} lines={["Riservatezza"]} w="w-[83px]" below disabled />
      </Group>
      <Group label="Adobe Acrobat" width="w-[84px]">
        <BigBtn icon={<Pdf />} lines={["Crea", "un PDF"]} w="w-[83px]" />
      </Group>
      <button aria-label="Opzioni barra multifunzione" className="mt-auto mr-[9px] mb-[9px] ml-auto flex"><Chevron big /></button>
    </div>
  );
}

function FormulaBar() {
  return (
    <div className="mx-2 mt-2 flex h-[66px] shrink-0 items-start">
      <div className="relative">
        <input aria-label="Casella nome" defaultValue="H7" className="h-[26px] w-[102px] rounded border border-[#d1d1d1] bg-white pl-[6px] text-[12px] outline-none" />
        <span className="pointer-events-none absolute top-[10px] right-[7px] flex"><Chevron big /></span>
      </div>
      <span className="mx-2 flex h-[26px] w-1 flex-col items-center justify-center gap-[3px]">
        <i className="size-[2px] bg-[#8a8a8a]" /><i className="size-[2px] bg-[#8a8a8a]" /><i className="size-[2px] bg-[#8a8a8a]" />
      </span>
      <div className="mr-1 flex h-[26px] w-[74px] items-center justify-around rounded border border-[#d1d1d1] bg-white">
        <button aria-label="Annulla"><Svg w={12} h={12}><path d="m.5.500 11 11M11.500.5l-11 11" stroke="#b8b8b8" /></Svg></button>
        <button aria-label="Invio"><Svg w={16} h={12}><path d="m.5 6.500 5 5L15.500.5" stroke="#b8b8b8" /></Svg></button>
        <button aria-label="Inserisci funzione" className="font-['Liberation_Serif',serif] text-[18px] leading-5 text-[#242424] italic">fx</button>
      </div>
      <div className="relative h-[66px] flex-1">
        <textarea aria-label="Barra della formula" className="block size-full resize-none rounded border border-[#d1d1d1] bg-white p-1 text-[12px] outline-none" />
        <button aria-label="Comprimi" className="absolute top-[7px] right-1 flex"><Chevron big up /></button>
      </div>
    </div>
  );
}

function Sheet() {
  return (
    <div className="mt-[7px] flex min-h-0 flex-1 overflow-hidden">
      <div className="min-w-0 flex-1 overflow-hidden border-b border-[#d6d6d6]">
        <table className="w-[1939px] table-fixed border-separate border-spacing-0 bg-white text-[13px]">
          <colgroup>
            <col className="w-[26px]" /><col className="w-[49px]" /><col className="w-[132px]" /><col className="w-[132px]" />
            {cols.slice(3).map((c, i) => <col key={i} className="w-[64px]" />)}
          </colgroup>
          <thead>
            <tr className="h-5">
              <th aria-label="Seleziona tutto" className="border-r border-b border-[#9b9b9b] bg-[#efefef] p-0">
                <svg width="12" height="12" viewBox="0 0 12 12" className="ml-auto mr-[3px]" aria-hidden="true"><path d="M12 0v12H0z" fill="#b2b2b2" /></svg>
              </th>
              {cols.map((c, i) => (
                <th
                  key={i}
                  scope="col"
                  className={`border-r p-0 align-top leading-[18px] font-normal ${c === "H" ? "border-b-2 border-r-[#b0b0b0] border-b-[#107c41] bg-[#d2d2d2] text-[#1e6b43]" : "border-b border-r-[#b0b0b0] border-b-[#9b9b9b] bg-[#efefef] text-black"}`}
                >
                  {c}
                </th>
              ))}
            </tr>
          </thead>
          <tbody>
            {Array.from({ length: 38 }, (_, r) => r + 1).map((r) => (
              <tr key={r} className="h-[19px]">
                <th
                  scope="row"
                  className={`border-b border-b-[#b8b8b8] p-0 leading-[18px] font-normal ${r === 7 ? "border-r-2 border-r-[#107c41] bg-[#d2d2d2] text-[#1e6b43]" : "border-r border-r-[#9b9b9b] bg-[#efefef] text-black"}`}
                >
                  {r}
                </th>
                {cols.map((c, i) =>
                  r === 1 && headings[c] ? (
                    <td key={i} className="border-r border-b border-black p-0 pt-[2px] text-center font-['Lato',sans-serif] text-[13px] leading-4 font-bold text-black">{headings[c]}</td>
                  ) : r === 7 && c === "H" ? (
                    <td key={i} className="relative border-r border-b border-[#e1e1e1] p-0">
                      <span className="absolute -inset-[2px] border-2 border-[#217346]" />
                      <span className="absolute -right-[3px] -bottom-[3px] size-[6px] border-t border-l border-white bg-[#217346]" />
                      <svg width="16" height="16" viewBox="0 0 16 16" className="absolute top-px left-[5px]" aria-hidden="true">
                        <path d="M6 2h5v4h4v5h-4v4H6v-4H2V6h4z" fill="#000" />
                        <path d="M5.500 1.500h4v4h4v4h-4v4h-4v-4h-4v-4h4z" fill="#fff" stroke="#000" />
                      </svg>
                    </td>
                  ) : (
                    <td key={i} className="border-r border-b border-[#e1e1e1] p-0" />
                  ),
                )}
              </tr>
            ))}
          </tbody>
        </table>
      </div>
      <div className="mr-px ml-[2px] flex w-[19px] flex-col items-center rounded-full bg-[#f5f5f5] pt-[5px] pb-[3px]">
        <svg width="10" height="7" viewBox="0 0 10 7" aria-hidden="true"><path d="M5 0q.5 0 1 .8L9.500 7h-9L4 .8Q4.500 0 5 0z" fill="#6e6e6e" /></svg>
        <div className="mt-1 w-[9px] flex-1 rounded-full bg-[#6e6e6e]" />
        <svg width="10" height="8" viewBox="0 0 10 8" className="mt-[23px]" aria-hidden="true"><path d="M5 8q-.5 0-1-.8L.5 0h9L6 7.200Q5.500 8 5 8z" fill="#6e6e6e" /></svg>
      </div>
    </div>
  );
}

function SheetTabs() {
  return (
    <div className="flex h-8 shrink-0 items-center text-[14px] whitespace-nowrap text-[#242424]">
      <button aria-label="Foglio precedente" className="flex w-9 justify-end"><Svg w={7} h={10}><path d="M6 .5 1.500 5 6 9.500" stroke="#55524f" /></Svg></button>
      <button aria-label="Foglio successivo" className="flex w-8 justify-end"><Svg w={7} h={10}><path d="M1 .5 5.500 5 1 9.500" stroke="#a0a0a0" /></Svg></button>
      <button aria-label="Altri fogli" className="flex w-8 justify-end"><Svg w={10} h={4}><path d="M0 2h2.500M3.700 2h2.500M7.400 2h2.500" stroke="#242424" strokeWidth="2.500" /></Svg></button>
      <span className="w-3" />
      {sheetTabs.map(([t, w]) => (
        <button key={t} className={`flex h-[18px] shrink-0 justify-center border-r border-[#c8c8c8] leading-[18px] ${w}`}>{t}</button>
      ))}
      <button aria-current="page" className="ml-1 flex h-7 w-[186px] shrink-0 justify-center self-start rounded-b border border-t-0 border-[#d9d9d9] bg-white pt-1 font-semibold">
        <span className="border-b-2 border-[#107c41] leading-[19px]">COUNTER TRANSLATIONS</span>
      </button>
      <span className="ml-[3px] h-[18px] w-px bg-[#c8c8c8]" />
      <button aria-label="Nuovo foglio" className="ml-[42px]"><Svg w={11} h={11}><path d="M5.500 0v11M0 5.500h11" stroke="#55524f" /></Svg></button>
      <span className="mr-[14px] ml-auto flex w-1 flex-col items-center gap-[3px]">
        <i className="size-[2px] bg-[#a0a0a0]" /><i className="size-[2px] bg-[#a0a0a0]" /><i className="size-[2px] bg-[#a0a0a0]" />
      </span>
      <div className="mr-[19px] flex h-4 w-[730px] shrink-0 items-center rounded-full bg-[#f5f5f5] pr-[5px] pl-1">
        <svg width="8" height="10" viewBox="0 0 8 10" aria-hidden="true"><path d="M0 5q0-.5.8-1L7 .5v9L.8 6Q0 5.500 0 5z" fill="#6e6e6e" /></svg>
        <div className="mr-[29px] ml-[5px] h-[9px] flex-1 rounded-full bg-[#6e6e6e]" />
        <svg width="8" height="10" viewBox="0 0 8 10" aria-hidden="true"><path d="M8 5q0-.5-.8-1L1 .5v9L7.200 6Q8 5.500 8 5z" fill="#6e6e6e" /></svg>
      </div>
    </div>
  );
}

function StatusBar() {
  return (
    <div className="flex h-[23px] shrink-0 items-center border-y border-[#c3c3c3] bg-[#f5f5f5] text-[11px] whitespace-nowrap text-[#242424]">
      <span className="pl-[7px]">Pronto</span>
      <button className="mr-[19px] ml-auto flex items-center gap-[3px]">
        <Svg w={15} h={14}>
          <path d="M5 10.500H.5v-9h13V6" />
          <circle cx="10" cy="9.500" r="2.800" strokeWidth="2" strokeDasharray="1.500 .7" />
          <circle cx="10" cy="9.500" r="1.500" />
        </Svg>
        Impostazioni di visualizzazione
      </button>
      <button aria-label="Normale" className="flex h-full w-10 items-center justify-center bg-[#dedede]"><Svg w={13} h={13}><path d="M.5.5h12v12H.5zM4.500 0v13M8.500 0v13M0 4.500h13M0 8.500h13" stroke="#242424" /></Svg></button>
      <button aria-label="Layout di pagina" className="flex w-10 justify-center"><Svg w={14} h={13}><path d="M.5.5h13v12H.5zM3.500 2.500h7v8h-7zM5 4.500h4M5 6.500h4M5 8.500h4" stroke="#242424" /></Svg></button>
      <button aria-label="Anteprima interruzioni" className="flex w-10 justify-center"><Svg w={14} h={13}><path d="M.5.5h13v12H.5zM4.500 0v7.500h5V0" stroke="#242424" /></Svg></button>
      <button aria-label="Zoom indietro" className="ml-[6px]"><Svg w={8} h={8}><path d="M0 4.500h8" stroke="#242424" /></Svg></button>
      <input
        type="range"
        aria-label="Zoom"
        defaultValue={50}
        className="mx-[5px] h-[14px] w-[100px] appearance-none bg-[linear-gradient(#c8c8c8,#c8c8c8)] bg-[length:100%_1px] bg-center bg-no-repeat [&::-webkit-slider-thumb]:h-[12px] [&::-webkit-slider-thumb]:w-[5px] [&::-webkit-slider-thumb]:appearance-none [&::-webkit-slider-thumb]:bg-[#616161]"
      />
      <button aria-label="Zoom avanti"><Svg w={8} h={8}><path d="M0 4.500h8M4.500 0v8" stroke="#242424" /></Svg></button>
      <span className="w-12 pr-[7px] text-right">100%</span>
    </div>
  );
}

function Taskbar() {
  return (
    <footer className="grid h-[47px] shrink-0 grid-cols-[1fr_auto_1fr] items-center bg-[#eeeeee] text-[12px] leading-4">
      <div className="flex items-center gap-[9px] pl-[21px]">
        <span className="size-5 rounded-full bg-linear-to-br from-[#f5c22b] to-[#f0620c]" />
        <div>
          <div className="text-[#242424]">28°C</div>
          <div className="text-[#666]">Soleggiato</div>
        </div>
      </div>
      <div className="flex items-center">
        <button aria-label="Start" className="flex w-11 justify-center">
          <T>
            <defs><linearGradient id="win" x1="0" y1="0" x2="1" y2="1"><stop offset="0" stopColor="#4cc8f8" /><stop offset="1" stopColor="#0069c8" /></linearGradient></defs>
            <path d="M.5.500h11v11h-11zM12.500.5h11v11h-11zM.5 12.500h11v11h-11zM12.500 12.500h11v11h-11z" fill="url(#win)" />
          </T>
        </button>
        <label className="mr-[2px] ml-1 flex h-8 w-[218px] items-center gap-[10px] rounded-full border border-[#dcdcdc] bg-[#fbfbfb] pl-[10px]">
          <Svg w={16} h={16}><circle cx="7" cy="7" r="5.500" stroke="#333" strokeWidth="1.800" /><path d="m11 11 4 4" stroke="#333" strokeWidth="2" /></Svg>
          <input aria-label="Cerca" placeholder="Cerca" className="w-32 bg-transparent text-[13px] outline-none placeholder:text-[#666]" />
        </label>
        {apps.map((a) => (
          <button key={a.name} aria-label={a.name} className="relative flex h-[47px] w-11 items-center justify-center">
            {a.active && <span className="absolute inset-x-[3px] top-1 bottom-1 rounded border border-[#e3e3e3] bg-[#f9f9f9]" />}
            <span className="relative">{a.icon}</span>
            {a.badge}
            {a.running && <span className="absolute bottom-[4px] left-[19px] h-[3px] w-[6px] rounded-full bg-[#8a8a8a]" />}
            {a.active && <span className="absolute bottom-[4px] left-[14px] h-[3px] w-4 rounded-full bg-[#0078d4]" />}
          </button>
        ))}
      </div>
      <div className="pr-[19px] text-right text-[#555]">
        <div>17:15</div>
        <div>04/09/2025</div>
      </div>
    </footer>
  );
}

export default function App() {
  return (
    <div className="flex h-screen min-w-0 flex-col overflow-hidden bg-[#efefef] font-['Open_Sans','Noto_Sans',sans-serif] text-[#242424]">
      <TitleBar />
      <nav className="flex h-[30px] shrink-0 items-center pl-2 text-[13px] whitespace-nowrap">
        {menu.map(([m, w]) => (
          <button key={m} className={`flex shrink-0 justify-center ${w}`}>
            <span className={m === "Home" ? "border-b-2 border-[#107c41] leading-[22px] font-semibold" : "leading-6"}>{m}</span>
          </button>
        ))}
        <button className="mr-2 ml-auto flex h-6 w-[97px] items-center justify-center gap-1 rounded border border-[#d1d1d1] bg-white font-semibold">
          <Svg w={11} h={11}><path d="M.5.5h10v7H5l-2.500 2.500V7.500h-2z" /></Svg>
          Commenti
        </button>
        <button className="mr-3 flex h-6 w-[90px] items-center justify-center gap-1 rounded bg-[#107c41] font-semibold text-white">
          <Svg w={12} h={12}><path d="M4 3.500H.5v8h9V9M7 .8 11.200 4 7 7.300V5.500C5 5.500 4 6.500 3 8.500c0-3.500 1.500-5.500 4-5.800z" stroke="#fff" /></Svg>
          Condividi
        </button>
      </nav>
      <Ribbon />
      <FormulaBar />
      <Sheet />
      <SheetTabs />
      <StatusBar />
      <Taskbar />
    </div>
  );
}
